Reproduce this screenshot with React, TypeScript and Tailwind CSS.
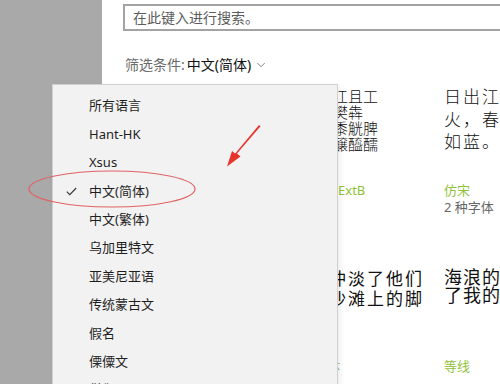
import { ChevronDown } from 'lucide-react';

const langs = [
  '所有语言',
  'Hant-HK',
  'Xsus',
  '中文(简体)',
  '中文(繁体)',
  '乌加里特文',
  '亚美尼亚语',
  '传统蒙古文',
  '假名',
  '傈僳文',
  '僧伽罗语',
];

type Card = {
  lines: string[];
  sample: string;
  name: string;
  count?: string;
};

const cards: Card[] = [
  { lines: ['永和九年', '岁在癸丑', '暮春之初'], sample: 'text-[17px] leading-[22px] pt-[2px]', name: '宋体', count: '2 种字体' },
  { lines: ['丁丂七江且工', '丌丐丑樊犇', '㐀㐂㐃黍觥脾', '㐆㐇㐈醸醯醹'], sample: 'text-[15px] leading-[16px] pt-[4px] font-light', name: 'SimSun-ExtB' },
  { lines: ['日出江花红胜', '火，春来江水', '如蓝。'], sample: 'text-[17px] leading-[22.5px] tracking-[2px] pt-[2px] font-light', name: '仿宋', count: '2 种字体' },
  { lines: ['海浪冲刷', '沙滩'], sample: 'text-[17px] leading-[20px] pt-[9px]', name: '楷体' },
  { lines: ['海浪冲淡了他们', '留在沙滩上的脚'], sample: 'text-[17px] leading-[20px] tracking-[2px] pt-[9px] pl-[3px]', name: '华文楷体' },
  { lines: ['海浪的声音盖过', '了我的呼喊'], sample: 'text-[18px] leading-[18px] tracking-[1px] pt-[8px]', name: '等线' },
];

export default function App() {
  return (
    <div className="relative flex h-[384px] w-[500px] overflow-hidden bg-white font-['Noto_Sans','Noto_Sans_CJK_SC',sans-serif] text-[#1a1a1a]">
      {/* dimmed side panel */}
      <div className="w-[102px] shrink-0 bg-[#a9a9a9]" />

      {/* main content */}
      <div className="flex min-w-0 flex-1 flex-col">
        <div className="ml-[21px] mt-[4px] flex h-[27px] w-[400px] shrink-0 items-center border-2 border-[#a3a3a3] pl-[8px] text-[14px] text-[#5c5c5c]">
          在此键入进行搜索。
        </div>

        <div className="ml-[23px] mt-[23px] flex h-[22px] items-center text-[14px]">
          <span className="text-[#6b6b6b]">筛选条件:</span>
          <span className="ml-[2px] text-[#111]">中文(简体)</span>
          <ChevronDown className="ml-[3px] h-[14px] w-[14px] text-[#555]" strokeWidth={1.2} />
        </div>

        <div className="ml-[30px] mt-[9px] grid grid-cols-[156px_156px_156px]">
          {cards.map((c, i) => (
            <div key={i} className="flex h-[176px] flex-col overflow-hidden">
              <div className={`h-[96px] whitespace-nowrap text-[#111] ${c.sample}`}>
                {c.lines.map((l, j) => (
                  <div key={j}>{l}</div>
                ))}
              </div>
              <div className="mt-[1px] text-[13px] leading-[18px] text-[#8fc33a]">{c.name}</div>
              {c.count && <div className="text-[13px] leading-[16px] text-[#666]">{c.count}</div>}
            </div>
          ))}
        </div>
      </div>

      {/* language dropdown */}
      <div className="absolute left-[52px] top-[84px] h-[320px] w-[286px] border border-[#d0d0d0] bg-[#f2f2f2] pt-[7px] shadow-[2px_2px_6px_rgba(0,0,0,0.08)]">
        {langs.map((l) => (
          <div key={l} className="relative flex h-[28.4px] items-center pl-[36px] text-[13px] text-[#1f1f1f]">
            {l === '中文(简体)' && (
              <svg className="absolute left-[13px] top-[10px]" width="11" height="9" viewBox="0 0 11 9">
                <path d="M0.8 4.6 L3.8 7.6 L10.2 1" fill="none" stroke="#333" strokeWidth="1.1" />
              </svg>
            )}
            {l}
          </div>
        ))}
      </div>

      {/* red annotation */}
      <svg className="pointer-events-none absolute left-0 top-0" width="500" height="384" viewBox="0 0 500 384">
        <ellipse cx="112" cy="189" rx="83" ry="18" fill="none" stroke="#e06262" strokeWidth="1.2" />
        <path d="M259 125 L260.5 126.3 L237 153.5 L240.5 156.5 L227 166.5 L232 151 L235.2 153.6 Z" fill="#e8332c" />
      </svg>
    </div>
  );
}
